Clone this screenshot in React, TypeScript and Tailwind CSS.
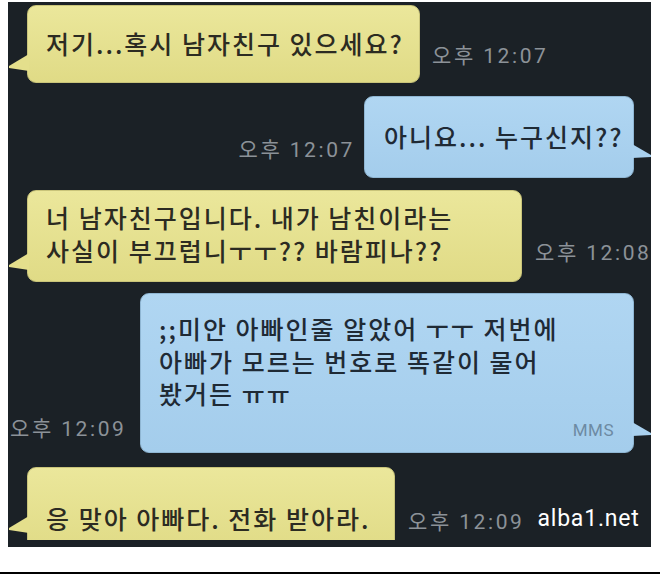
import React from "react";

const KR = { fontFamily: '"Noto Sans CJK KR", "Noto Sans", sans-serif' };
const LAT = { fontFamily: 'Roboto, "Noto Sans CJK KR", sans-serif' };

function TailLeft({ className }: { className: string }) {
  return (
    <svg className={className} width="20" height="18" viewBox="0 0 20 18">
      <polygon points="20,0 0,12 0,14 20,17" fill="#e4df8c" />
    </svg>
  );
}

function TailRight({ className }: { className: string }) {
  return (
    <svg className={className} width="19" height="16" viewBox="0 0 19 16">
      <polygon points="0,0 19,11 19,13 0,14" fill="#a9d1ef" />
    </svg>
  );
}

function Time({ t, className = "" }: { t: string; className?: string }) {
  return (
    <div
      className={`shrink-0 whitespace-nowrap text-[21px] leading-[20px] tracking-[2.6px] font-normal text-[#8c9298] ${className}`}
      style={KR}
    >
      오후 <span style={LAT}>{t}</span>
    </div>
  );
}

const yellow =
  "relative shrink-0 rounded-[9px] bg-gradient-to-b from-[#ebe79b] to-[#e0db86] border border-[#c9c47a] text-[#2c2b22]";
const blue =
  "relative shrink-0 rounded-[9px] bg-gradient-to-b from-[#b0d6f2] to-[#a4cdec] border border-[#8fb6d3] text-[#1f2a35]";

export default function App() {
  return (
    <div className="w-[660px] h-[574px] bg-white flex flex-col">
      <div className="ml-[8px] mt-[2px] w-[643px] h-[545px] bg-[#1b2126] overflow-hidden flex flex-col">
        <div
          className="h-[538px] overflow-hidden flex flex-col pt-[3px] text-[25px] font-medium tracking-[2px]"
          style={KR}
        >
          {/* Row 1 */}
          <div className="flex items-end pl-[19px]">
            <div className={`${yellow} w-[393px] h-[78px] flex items-center pl-[18px] whitespace-nowrap`}>
              <TailLeft className="absolute -left-[19px] bottom-[10px]" />
              <span>저기...혹시 남자친구 있으세요?</span>
            </div>
            <Time t="12:07" className="ml-[12px] mb-[17px]" />
          </div>

          {/* Row 2 */}
          <div className="flex items-end justify-end pr-[17px] mt-[13px]">
            <Time t="12:07" className="mr-[9px] mb-[18px]" />
            <div className={`${blue} w-[270px] h-[82px] flex items-center pl-[19px] whitespace-nowrap`}>
              <TailRight className="absolute -right-[18px] bottom-[17px]" />
              <span>아니요... 누구신지??</span>
            </div>
          </div>

          {/* Row 3 */}
          <div className="flex items-end pl-[19px] mt-[12px]">
            <div className={`${yellow} w-[495px] h-[92px] pl-[18px] pt-[10px] leading-[33px] whitespace-nowrap`}>
              <TailLeft className="absolute -left-[19px] bottom-[10px]" />
              <div>너 남자친구입니다. 내가 남친이라는</div>
              <div>사실이 부끄럽니ㅜㅜ?? 바람피나??</div>
            </div>
            <Time t="12:08" className="ml-[13px] mb-[19px]" />
          </div>

          {/* Row 4 */}
          <div className="flex items-end pl-[2px] pr-[17px] mt-[11px]">
            <Time t="12:09" className="mb-[14px]" />
            <div className="flex-1" />
            <div
              className={`${blue} w-[494px] h-[160px] flex flex-col pl-[18px] pr-[19px] pt-[18px] leading-[32.5px] whitespace-nowrap`}
            >
              <TailRight className="absolute -right-[18px] bottom-[14px]" />
              <div>;;미안 아빠인줄 알았어 ㅜㅜ 저번에</div>
              <div>아빠가 모르는 번호로 똑같이 물어</div>
              <div>봤거든 ㅠㅠ</div>
              <div
                className="mt-auto mb-[14px] self-end text-[17px] leading-[16px] font-normal tracking-[0.5px] text-[#6d8aa3]"
                style={LAT}
              >
                MMS
              </div>
            </div>
          </div>

          {/* Row 5 */}
          <div className="flex items-start pl-[19px] mt-[14px]">
            <div className={`${yellow} w-[368px] h-[85px] pl-[18px] pt-[34px] leading-[33px] whitespace-nowrap`}>
              <TailLeft className="absolute -left-[19px] top-[48px]" />
              <span>응 맞아 아빠다. 전화 받아라.</span>
            </div>
            <Time t="12:09" className="ml-[13px] mt-[43px]" />
            <div
              className="ml-[13px] mt-[41px] text-[23px] leading-[22px] font-normal tracking-[0.8px] text-white whitespace-nowrap"
              style={LAT}
            >
              alba1.net
            </div>
          </div>
        </div>
      </div>
      <div className="mt-auto h-[2px] bg-black" />
    </div>
  );
}
